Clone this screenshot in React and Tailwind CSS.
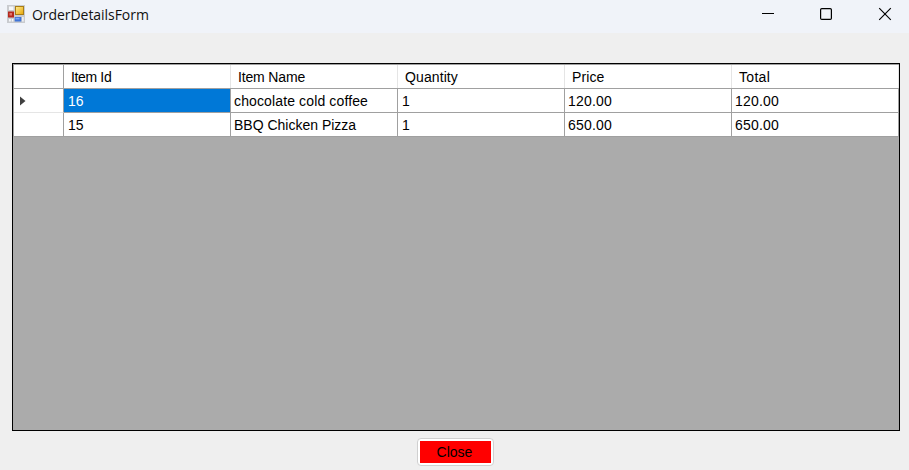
const headers = [
  { label: 'Item Id', tracking: 'tracking-[-0.35px]' },
  { label: 'Item Name', tracking: 'tracking-[-0.15px]' },
  { label: 'Quantity', tracking: 'tracking-[0.1px]' },
  { label: 'Price', tracking: 'tracking-[0.1px]' },
  { label: 'Total', tracking: 'tracking-[0.3px]' },
];
const rows = [
  ['16', 'chocolate cold coffee', '1', '120.00', '120.00'],
  ['15', 'BBQ Chicken Pizza', '1', '650.00', '650.00'],
];
const columnStyles = [
  'pl-[4px] tracking-[-0.1px]',
  'pl-[3px]',
  'pl-[4px]',
  'pl-[3px] tracking-[0.2px]',
  'pl-[3px] tracking-[0.2px]',
];

function FormIcon() {
  return (
    <svg width="18" height="18" viewBox="0 0 18 18" className="shrink-0">
      <defs>
        <linearGradient id="gold" x1="0" y1="0" x2="1" y2="1">
          <stop offset="0" stopColor="#ffe88a" />
          <stop offset="1" stopColor="#e9ab10" />
        </linearGradient>
      </defs>
      <rect width="18" height="18" fill="#c9cbcf" />
      <rect x="2" y="1.5" width="4.5" height="3.5" fill="#f6f7fa" />
      <rect x="1" y="6.5" width="6" height="6" fill="#b5281e" />
      <rect x="2.5" y="8" width="2.5" height="2.5" fill="#e0766a" />
      <rect x="2" y="14" width="1.8" height="2.5" fill="#f6f7fa" />
      <rect x="4.8" y="14" width="1.5" height="2.5" fill="#f6f7fa" />
      <rect x="8" y="1" width="9" height="9" fill="#a87d16" />
      <rect x="9" y="2" width="7" height="7" fill="url(#gold)" />
      <rect x="7.7" y="12" width="6.6" height="4.5" fill="#3f74d8" />
      <rect x="8.5" y="12.8" width="4" height="1.6" fill="#80aaf5" />
      <rect x="15.2" y="12" width="1.4" height="4.5" fill="#f6f7fa" />
    </svg>
  );
}

function TitleBar() {
  return (
    <header className="flex h-[33px] shrink-0 items-start bg-[#f0f3f9] pl-[7px]">
      <div className="flex h-[28px] items-center gap-[7px]">
        <FormIcon />
        <span className="pt-[2px] font-['Open_Sans','Noto_Sans',sans-serif] text-[14px] leading-[20px] tracking-[-0.05px] whitespace-nowrap text-[#111]">
          OrderDetailsForm
        </span>
      </div>
      <svg width="147" height="28" viewBox="0 0 147 28" className="ml-auto" fill="none" stroke="#000">
        <path d="M0 13.5h12" shapeRendering="crispEdges" />
        <rect x="58.6" y="8.6" width="10.8" height="10.8" rx="1.2" strokeWidth="1.2" />
        <path d="M117.2 8.2l11.6 11.6M128.8 8.2l-11.6 11.6" strokeWidth="1.15" />
      </svg>
    </header>
  );
}

function OrderGrid() {
  return (
    <div className="h-[368px] w-[888px] border border-black bg-[#ababab]">
      <div className="border-t border-l border-[#a0a0a0]">
        <div className="grid h-[24px] grid-cols-[50px_repeat(5,167px)] border-b border-[#a0a0a0] bg-white">
          <div className="border-r border-[#a0a0a0]" />
          {headers.map((h) => (
            <div
              key={h.label}
              className={`h-[23px] border-r border-[#e5e5e5] pt-px pl-[7px] leading-[22px] ${h.tracking}`}
            >
              {h.label}
            </div>
          ))}
        </div>
        {rows.map((row, r) => (
          <div key={row[0]} className="grid h-[24px] grid-cols-[50px_repeat(5,167px)] bg-white">
            <div
              className={`flex h-[24px] items-center border-r border-b border-r-[#a0a0a0] pl-[6px] ${
                r === 0 ? 'border-b-[#e5e5e5]' : 'border-b-[#a0a0a0]'
              }`}
            >
              {r === 0 && (
                <svg width="6" height="10" viewBox="0 0 6 10">
                  <path d="M0 0.5L5.5 5L0 9.5z" fill="#404040" />
                </svg>
              )}
            </div>
            {row.map((cell, c) => (
              <div
                key={c}
                className={`h-[24px] border-r border-b border-[#a0a0a0] pt-px leading-[22px] ${columnStyles[c]} ${
                  r === 0 && c === 0 ? 'bg-[#0078d7] text-white' : ''
                } ${r === 0 && c === 1 ? 'tracking-[0.13px]' : ''}`}
              >
                {cell}
              </div>
            ))}
          </div>
        ))}
      </div>
    </div>
  );
}

export default function App() {
  return (
    <div className="flex h-[470px] w-[909px] flex-col overflow-hidden bg-[#efefef] font-['Liberation_Sans',Arial,sans-serif] text-[14px] text-black">
      <TitleBar />
      <main className="flex flex-col pt-[30px] pl-[12px]">
        <OrderGrid />
        <button className="mt-[7px] ml-[405px] h-[28px] w-[77px] rounded-[4px] border border-[#d0d0d0] bg-white p-[2px]">
          <span className="block h-[22px] bg-[#ff0000] pr-[2px] leading-[22px]">Close</span>
        </button>
      </main>
    </div>
  );
}
